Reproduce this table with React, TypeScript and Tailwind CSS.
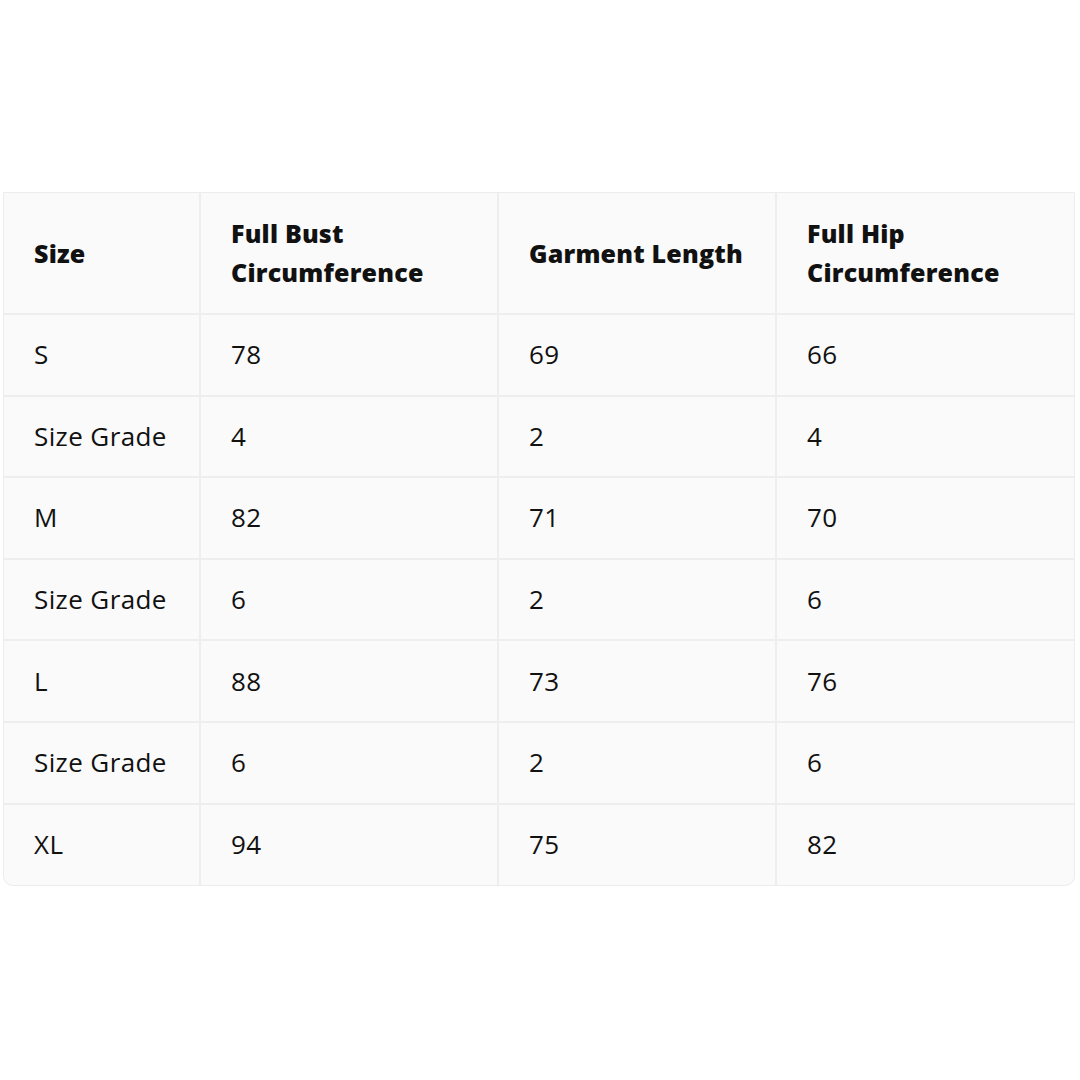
import React from "react";

const rows: string[][] = [
  ["S", "78", "69", "66"],
  ["Size Grade", "4", "2", "4"],
  ["M", "82", "71", "70"],
  ["Size Grade", "6", "2", "6"],
  ["L", "88", "73", "76"],
  ["Size Grade", "6", "2", "6"],
  ["XL", "94", "75", "82"],
];

export default function App() {
  return (
    <div className="w-[1080px] h-[1080px] bg-white pt-[192px] pl-[3px]" style={{ fontFamily: '"Open Sans", "Noto Sans", sans-serif' }}>
      <div className="w-[1072px] border border-[#ececec] rounded-b-[10px] overflow-hidden bg-[#fafafa]">
        <table className="w-full border-collapse table-fixed text-[#111111]">
          <colgroup>
            <col className="w-[196px]" />
            <col className="w-[298px]" />
            <col className="w-[278px]" />
            <col />
          </colgroup>
          <thead>
            <tr className="h-[121px]">
              {["Size", "Full Bust Circumference", "Garment Length", "Full Hip Circumference"].map((h, i) => (
                <th
                  key={h}
                  className={`text-left align-middle font-extrabold text-[25px] tracking-[0.2px] leading-[39px] pl-[30px] pr-[10px] border-b-2 border-[#eeeeee] ${i > 0 ? "border-l-2" : ""}`}
                >
                  {h === "Full Bust Circumference" ? (
                    <>Full Bust<br />Circumference</>
                  ) : h === "Full Hip Circumference" ? (
                    <>Full Hip<br />Circumference</>
                  ) : (
                    h
                  )}
                </th>
              ))}
            </tr>
          </thead>
          <tbody>
            {rows.map((r, ri) => (
              <tr key={ri} className="h-[81.6px]">
                {r.map((c, ci) => (
                  <td
                    key={ci}
                    className={`align-middle text-[26px] tracking-[0.4px] pl-[30px] border-[#eeeeee] ${ci > 0 ? "border-l-2" : ""} ${ri < rows.length - 1 ? "border-b-2" : ""}`}
                  >
                    {c}
                  </td>
                ))}
              </tr>
            ))}
          </tbody>
        </table>
      </div>
    </div>
  );
}
